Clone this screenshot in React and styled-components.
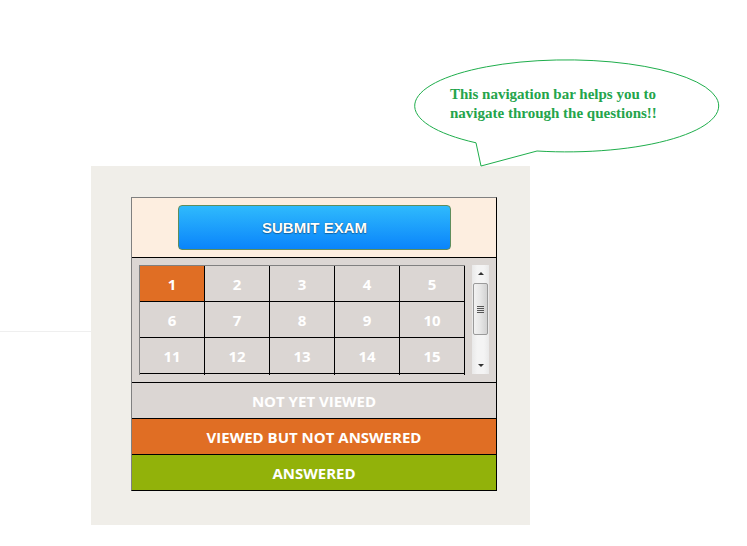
import React from "react";
import styled, { createGlobalStyle } from "styled-components";

const GlobalStyle = createGlobalStyle`
  html, body { margin: 0; padding: 0; }
  body {
    background: #ffffff linear-gradient(#efefef, #efefef) 0 331px / 91px 1px no-repeat;
    font-family: "Open Sans", "Noto Sans", sans-serif;
  }
`;

const Page = styled.div`
  position: relative;
  width: 747px;
  height: 546px;
  box-sizing: border-box;
  padding: 166px 0 0 91px;
`;

const Panel = styled.div`
  width: 439px;
  height: 359px;
  box-sizing: border-box;
  background: #f0eee9;
  padding: 31px 33px 35px 40px;
`;

const Navigator = styled.div`
  width: 366px;
  box-sizing: border-box;
  border: 1px solid;
  border-color: #808080 #000 #000 #808080;
  display: flex;
  flex-direction: column;
`;

const Header = styled.div`
  height: 60px;
  box-sizing: border-box;
  background: #fdeee0;
  border-bottom: 1px solid #000;
  display: flex;
  justify-content: center;
  padding-top: 7px;
`;

const SubmitButton = styled.button`
  width: 273px;
  height: 45px;
  margin-left: 1px;
  border: 1px solid #5f8d5c;
  border-radius: 4px;
  background: linear-gradient(#2fbafc, #0a84fb);
  color: #fff;
  font-family: "Liberation Sans", Arial, sans-serif;
  font-weight: 700;
  font-size: 15px;
  text-shadow: 0 0 1px rgba(0, 0, 0, 0.55), 0 1px 1px rgba(0, 0, 0, 0.3);
  padding: 0;
  cursor: pointer;
`;

const GridArea = styled.div`
  height: 124px;
  box-sizing: border-box;
  background: #dbd6d3;
  padding: 7px;
  display: flex;
  gap: 7px;
`;

const GridViewport = styled.div`
  width: 326px;
  height: 110px;
  box-sizing: border-box;
  border-top: 1px solid #808080;
  border-left: 1px solid #808080;
  overflow: hidden;
`;

const Grid = styled.div`
  display: grid;
  grid-template-columns: repeat(5, 65px);
  grid-auto-rows: 36px;
`;

const Cell = styled.div`
  box-sizing: border-box;
  border-right: 1px solid #000;
  border-bottom: 1px solid #000;
  background: ${(p) => (p.$state === "viewed" ? "#e06e24" : p.$state === "answered" ? "#92b20a" : "#dbd6d3")};
  color: #fff;
  font-weight: 700;
  font-size: 15px;
  display: flex;
  align-items: center;
  justify-content: center;
`;

const Scrollbar = styled.div`
  width: 17px;
  height: 109px;
  box-sizing: border-box;
  background: linear-gradient(90deg, #e9e9e9, #f4f4f4 30%, #f4f4f4 70%, #e9e9e9);
  display: flex;
  flex-direction: column;
  align-items: center;
`;

const ArrowButton = styled.div`
  height: 17px;
  width: 17px;
  display: flex;
  align-items: center;
  justify-content: center;
  &::before {
    content: "";
    width: 0;
    height: 0;
    border-left: 3px solid transparent;
    border-right: 3px solid transparent;
    ${(p) => (p.$down ? "border-top: 3px solid #333;" : "border-bottom: 3px solid #333;")}
  }
`;

const Thumb = styled.div`
  width: 15px;
  height: 52px;
  margin-top: 1px;
  box-sizing: border-box;
  border: 1px solid #9a9a9a;
  border-radius: 2px;
  background: linear-gradient(90deg, #f2f2f2, #e6e6e6 50%, #d2d2d2);
  display: flex;
  flex-direction: column;
  align-items: center;
  justify-content: center;
  gap: 1px;
`;

const Grip = styled.span`
  display: block;
  width: 7px;
  height: 1px;
  background: #555;
`;

const Spacer = styled.div`
  flex: 1;
`;

const LegendRow = styled.div`
  height: 36px;
  box-sizing: border-box;
  border-top: 1px solid #000;
  background: ${(p) => p.$bg};
  color: #fff;
  font-weight: 700;
  font-size: 15px;
  display: flex;
  align-items: center;
  justify-content: center;
`;

const BubbleSvg = styled.svg`
  position: absolute;
  left: 0;
  top: 0;
  pointer-events: none;
`;

const BubbleText = styled.div`
  position: absolute;
  left: 450px;
  top: 85px;
  font-family: "Liberation Serif", "Times New Roman", serif;
  font-weight: 700;
  font-size: 15px;
  line-height: 19px;
  color: #24a44b;
  white-space: nowrap;
`;

const questions = Array.from({ length: 20 }, (_, i) => ({
  n: i + 1,
  state: i === 0 ? "viewed" : "none",
}));

export default function App() {
  return (
    <>
      <GlobalStyle />
      <Page>
        <Panel>
          <Navigator>
            <Header>
              <SubmitButton>SUBMIT EXAM</SubmitButton>
            </Header>
            <GridArea>
              <GridViewport>
                <Grid>
                  {questions.map((q) => (
                    <Cell key={q.n} $state={q.state}>
                      {q.n}
                    </Cell>
                  ))}
                </Grid>
              </GridViewport>
              <Scrollbar>
                <ArrowButton />
                <Thumb>
                  <Grip />
                  <Grip />
                  <Grip />
                  <Grip />
                </Thumb>
                <Spacer />
                <ArrowButton $down />
              </Scrollbar>
            </GridArea>
            <LegendRow $bg="#dbd6d3">NOT YET VIEWED</LegendRow>
            <LegendRow $bg="#e06e24">VIEWED BUT NOT ANSWERED</LegendRow>
            <LegendRow $bg="#92b20a">ANSWERED</LegendRow>
          </Navigator>
        </Panel>
        <BubbleSvg width="747" height="200" viewBox="0 0 747 200">
          <path
            d="M 476 142.8 L 481 166 L 537 151 A 152 46 0 1 0 476 142.8 Z"
            fill="#fff"
            stroke="#1fae4c"
            strokeWidth="1"
          />
        </BubbleSvg>
        <BubbleText>
          This navigation bar helps you to
          <br />
          navigate through the questions!!
        </BubbleText>
      </Page>
    </>
  );
}
